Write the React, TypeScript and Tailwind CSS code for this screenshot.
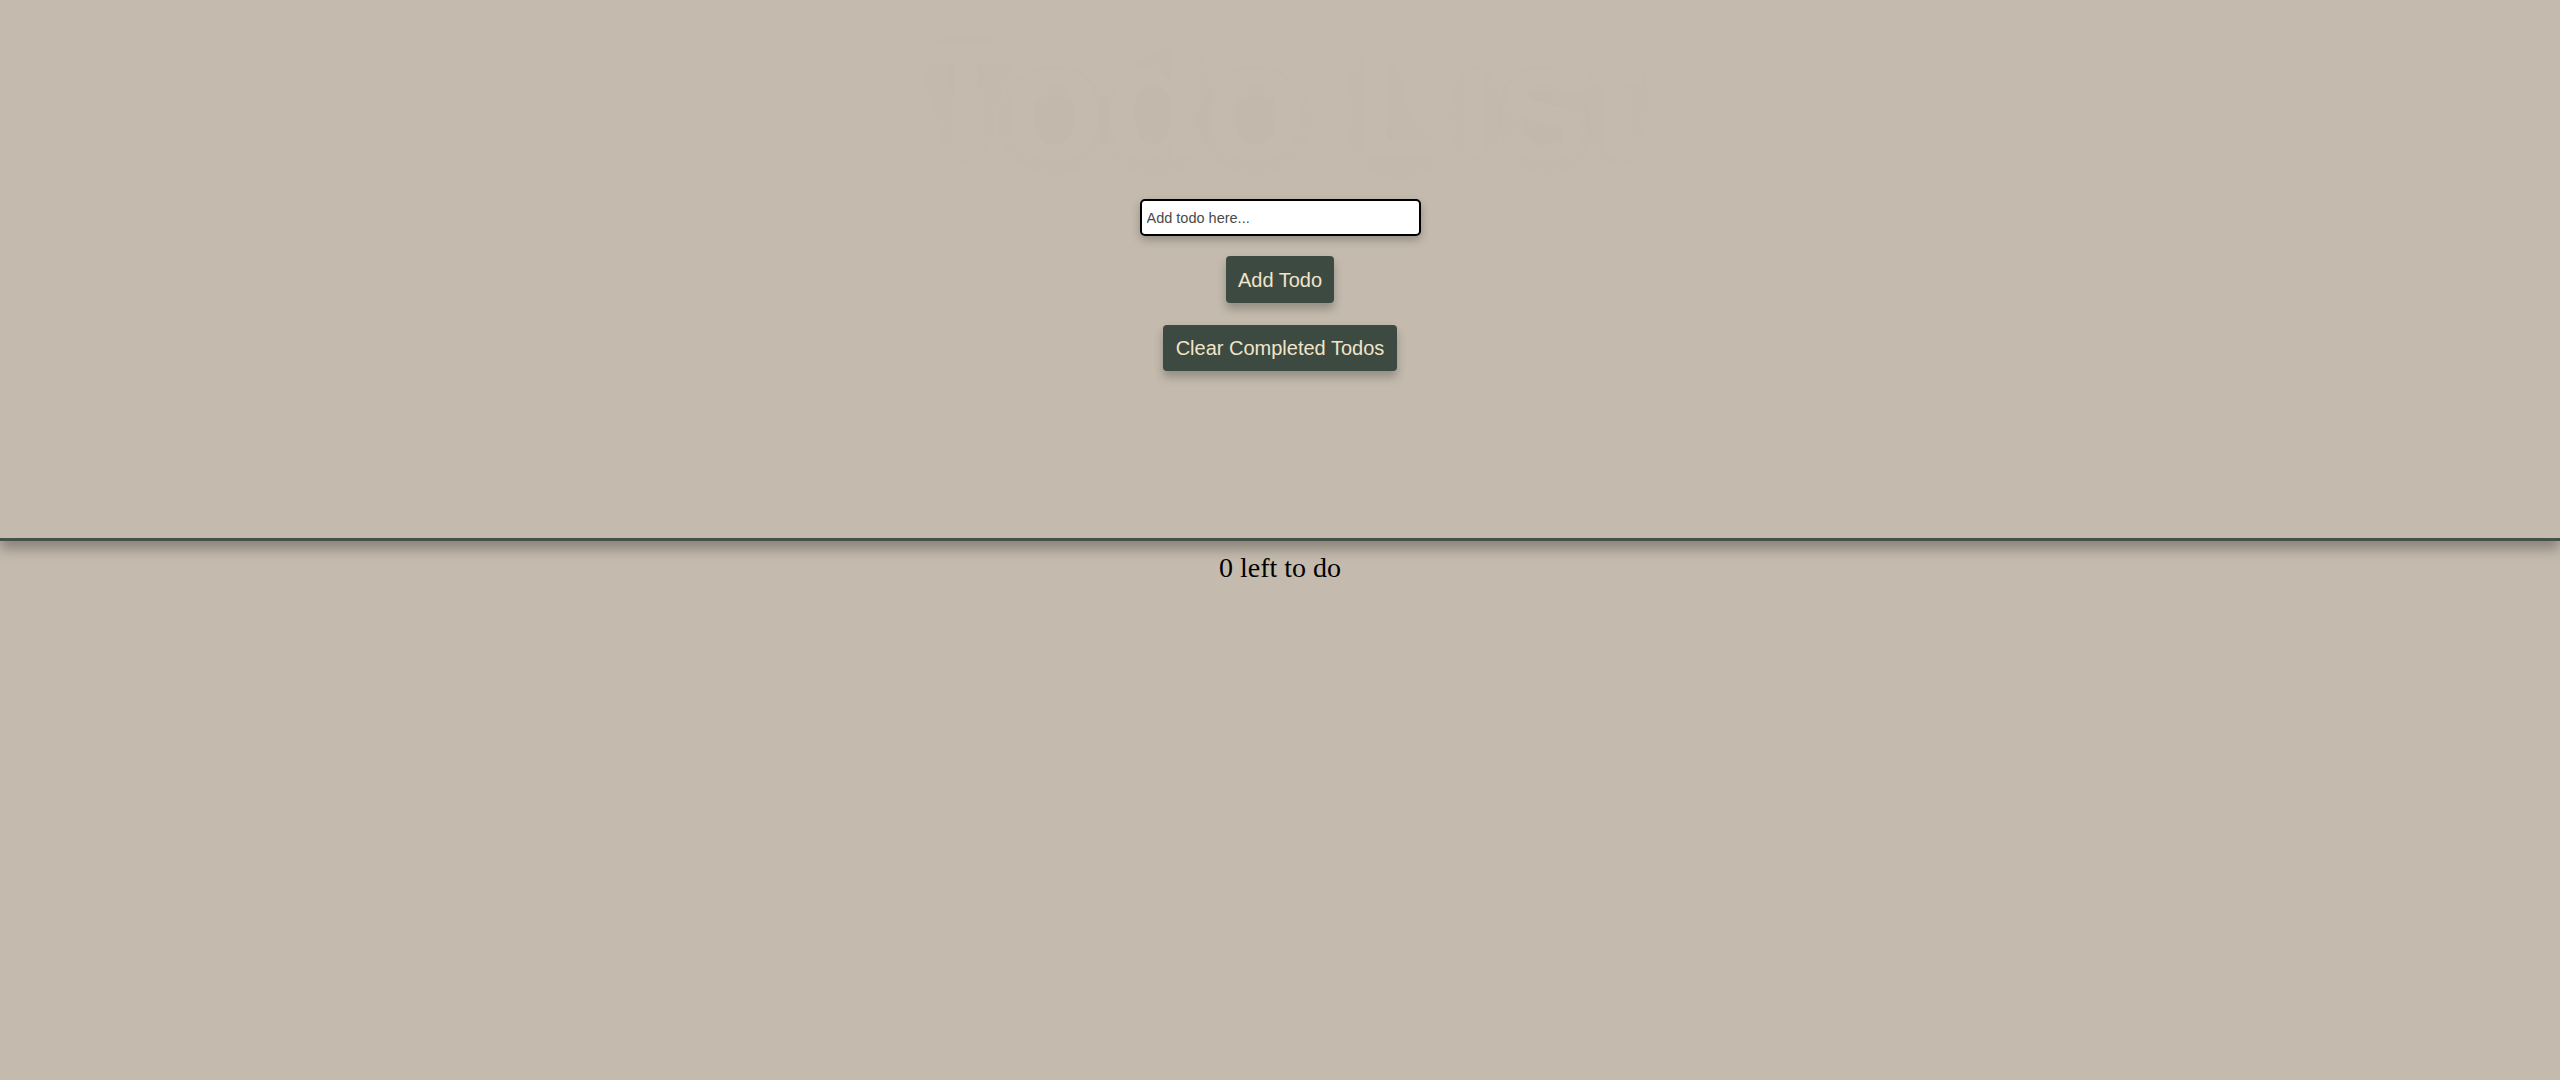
import React from "react";

export default function App() {
  return (
    <div className="min-h-screen w-full bg-[#c4bbae] font-['Liberation_Serif','Times_New_Roman',serif]">
      <header className="relative z-10 flex h-[541px] flex-col items-center border-b-[3px] border-[#45524a] bg-[#c4bbae] shadow-[0_8px_12px_rgba(0,0,0,0.3)]">
        <h1 className="mt-[4px] select-none text-center font-['Liberation_Sans',Arial,sans-serif] text-[165px] leading-[195px] font-bold text-[#c4bbae] [text-shadow:0_6px_50px_rgba(0,0,0,0.018)]">
          Todo List
        </h1>
        <input
          type="text"
          placeholder="Add todo here..."
          className="h-[37px] w-[281px] rounded-[5px] border-2 border-black bg-white px-[5px] font-['Liberation_Sans',Arial,sans-serif] text-[14.5px] text-black shadow-[0_4px_8px_rgba(0,0,0,0.25)] outline-none placeholder:text-[#4a4a4a]"
        />
        <button className="mt-[20px] h-[47px] rounded-[4px] bg-[#3d4a41] px-[12px] font-['Liberation_Sans',Arial,sans-serif] text-[20px] leading-[24px] text-[#f1e4c9] shadow-[0_6px_10px_rgba(0,0,0,0.25)]">
          Add Todo
        </button>
        <button className="mt-[22px] h-[46px] rounded-[4px] bg-[#3d4a41] px-[13px] font-['Liberation_Sans',Arial,sans-serif] text-[20px] leading-[24px] text-[#f1e4c9] shadow-[0_6px_10px_rgba(0,0,0,0.25)]">
          Clear Completed Todos
        </button>
      </header>
      <div className="mt-[11px] text-center text-[28px] leading-[32px] text-black">0 left to do</div>
    </div>
  );
}
